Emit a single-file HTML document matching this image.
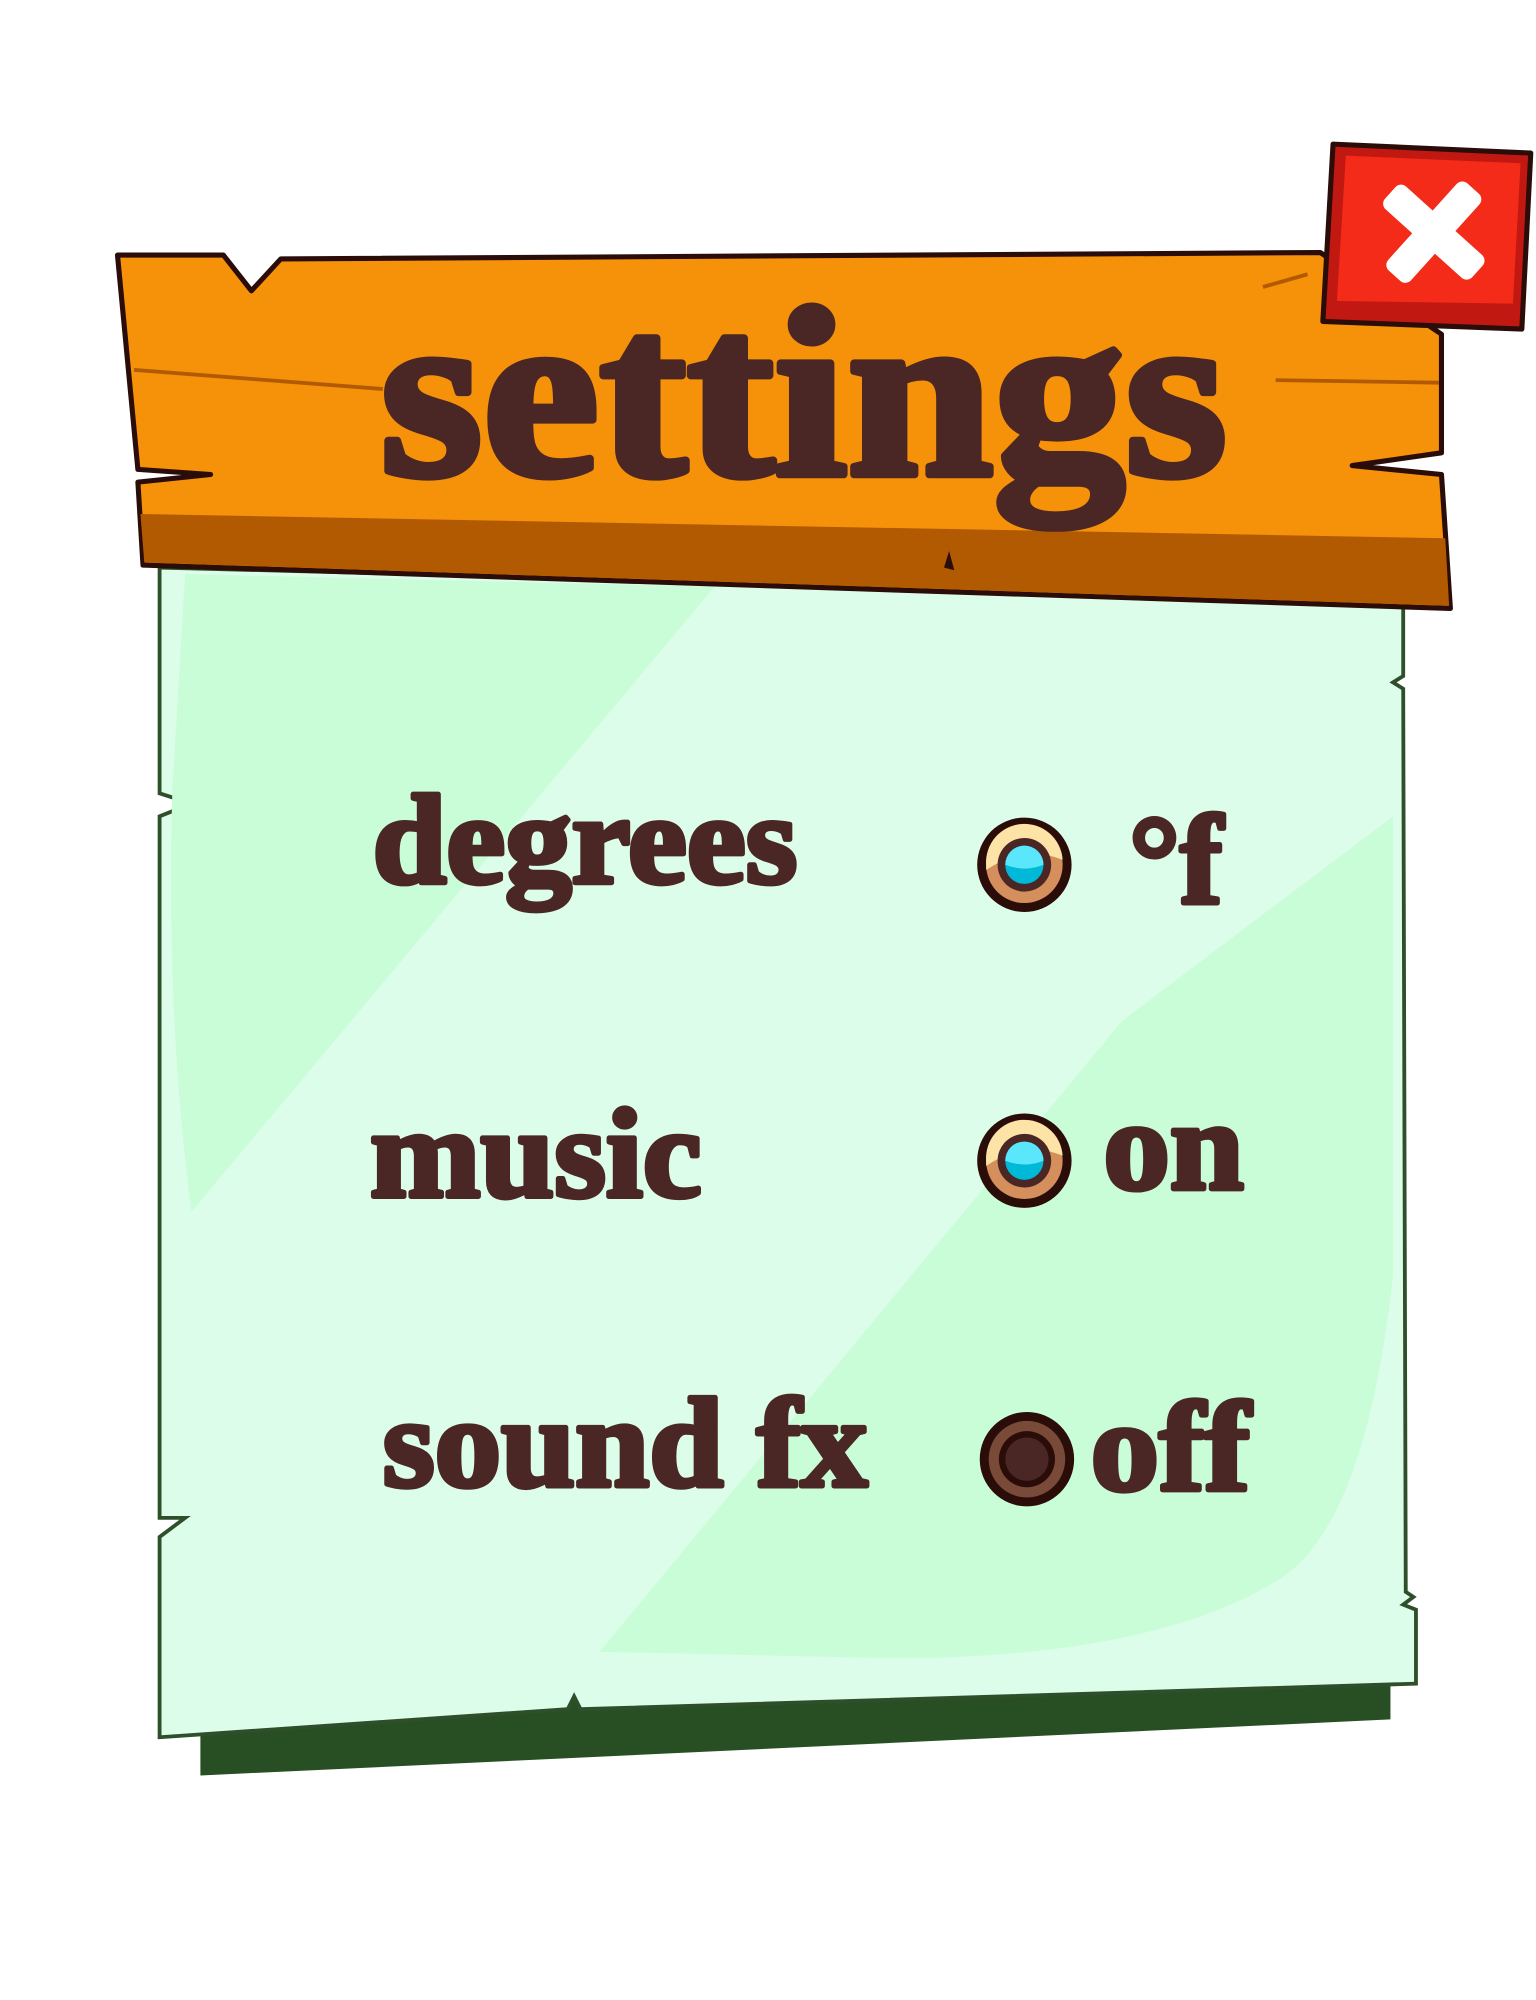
<!DOCTYPE html>
<html><head><style>html,body{margin:0;padding:0;background:#fff}svg{display:block}</style></head>
<body>
<svg width="1536" height="2000" viewBox="0 0 1204 1568" xmlns="http://www.w3.org/2000/svg">
<defs>
<g id="radioOn">
<circle r="37" fill="#2a0c08"/>
<circle r="30" fill="#d48f5c"/>
<path d="M-30,0 A30,30 0 0 1 30,-4 Q0,-16 -30,4Z" fill="#fde3a6"/>
<circle r="21" fill="#4a2624"/>
<circle r="15" fill="#00b8d8"/>
<path d="M-15,0 A15,15 0 0 1 15,0 Q0,6 -15,0Z" fill="#5ae6fb"/>
</g>
</defs>
<!-- shadow -->
<polygon points="157,1330 1090,1290 1090,1348 157,1392" fill="#284e24"/>
<!-- green panel -->
<polygon points="125,445 1100,470 1100,530 1092,535 1100,540 1102,1248 1108,1252 1100,1258 1110,1262 1110,1320 455,1340 450,1330 445,1340 125,1362 125,1205 145,1190 125,1190 125,640 150,630 125,622" fill="#dcfde9" stroke="#2f4f2a" stroke-width="3"/>
<path d="M145,450 L560,460 L150,950 Q130,800 135,620Z" fill="#c9fdd8"/>
<path d="M1092,640 L1092,1000 Q1070,1200 1000,1240 Q900,1300 700,1300 L470,1295 L880,800Z" fill="#c9fdd8"/>
<!-- banner -->
<polygon points="92,200 175,200 197,228 220,203 1035,198 1130,262 1130,355 1060,365 1130,372 1137,477 112,443 108,378 165,372 108,368" fill="#f6910a" stroke="#2a0c08" stroke-width="4" stroke-linejoin="round"/>
<polygon points="110,403 1133,422 1136,475 113,441" fill="#b25a02"/>
<path d="M105,290 L300,305 M1000,298 L1128,300 M440,422 L550,424 M990,225 L1025,215" stroke="#b25a02" stroke-width="3" fill="none"/>
<path d="M740,445 L744,432 L748,447Z" fill="#2a0c08"/>
<!-- close button -->
<polygon points="1045,113 1200,120 1193,258 1037,252" fill="#c21812" stroke="#2a0c08" stroke-width="4" stroke-linejoin="round"/>
<polygon points="1055,122 1192,128 1186,238 1048,236" fill="#f32b18"/>
<g transform="translate(1124,182) rotate(42)" fill="#fff"><rect x="-46" y="-12" width="92" height="24" rx="6"/><rect x="-12" y="-46" width="24" height="92" rx="6"/></g>
<!-- text -->
<g font-family="'Liberation Serif',serif" font-weight="bold" fill="#4a2624" stroke="#4a2624" stroke-linejoin="round">
<text x="298" y="372" font-size="190" stroke-width="6" textLength="664" lengthAdjust="spacingAndGlyphs">settings</text>
<text x="292" y="692" font-size="100" stroke-width="4" textLength="333" lengthAdjust="spacingAndGlyphs">degrees</text>
<text x="290" y="938" font-size="100" stroke-width="4" textLength="260" lengthAdjust="spacingAndGlyphs">music</text>
<text x="300" y="1165" font-size="100" stroke-width="4" textLength="380" lengthAdjust="spacingAndGlyphs">sound fx</text>
<text x="885" y="708" font-size="100" stroke-width="4">°f</text>
<text x="865" y="932" font-size="100" stroke-width="4" textLength="110" lengthAdjust="spacingAndGlyphs">on</text>
<text x="855" y="1168" font-size="100" stroke-width="4" textLength="125" lengthAdjust="spacingAndGlyphs">off</text>
</g>
<!-- radios -->
<use href="#radioOn" x="803" y="678"/>
<use href="#radioOn" x="803" y="910"/>
<g transform="translate(805,1144)">
<circle r="37" fill="#2a0c08"/>
<circle r="30" fill="#7a4a38"/>
<circle r="22" fill="#2a0c08"/>
<circle r="17" fill="#4a2624"/>
</g>
</svg>
</body></html>
